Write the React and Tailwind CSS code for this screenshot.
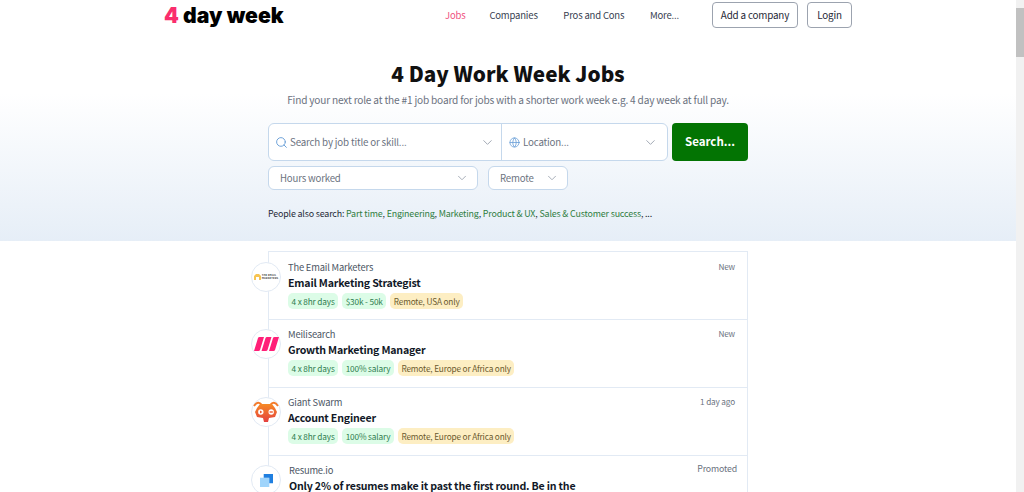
import React from "react";
import { Search, ChevronDown, Globe } from "lucide-react";

const sans = "font-['Noto_Sans_CJK_SC','Liberation_Sans',sans-serif]";

const NavLink = ({ children, active }) => (
  <a className={`whitespace-nowrap text-[9.5px] leading-[16px] tracking-[-0.018em] ${active ? "text-[#f0527f]" : "text-[#374151]"}`}>{children}</a>
);

const OutlineBtn = ({ children, className }) => (
  <a className={`flex h-[26px] items-center justify-center whitespace-nowrap rounded-[4px] border border-[#9ca3af] bg-white text-[9.85px] tracking-[-0.018em] text-[#1f2937] ${className}`}>{children}</a>
);

const Select = ({ label, className }) => (
  <div className={`flex h-[24px] items-center justify-between rounded-[6px] border border-[#c5d8ec] bg-white pl-[11px] pr-[8px] text-[9.65px] tracking-[-0.018em] text-[#6b7280] ${className}`}>
    <span>{label}</span>
    <ChevronDown size={14} strokeWidth={1.5} className="text-[#9ca3af]" />
  </div>
);

const Chip = ({ children, amber }) => (
  <span className={`flex h-[16px] items-center whitespace-nowrap rounded-[5px] px-[3.5px] text-[8.25px] leading-[16px] tracking-[-0.018em] ${amber ? "bg-[#fdeec3] text-[#6b5a2e]" : "bg-[#dcfce7] text-[#2f7d4f]"}`}>{children}</span>
);

const EmailLogo = () => (
  <div className="flex items-center gap-[1px]">
    <svg width="7" height="6" viewBox="0 0 7 6"><path d="M0 6V2l2-2h3l2 2v4H5V3H2v3z" fill="#f6c453" /></svg>
    <span className="text-[2.6px] font-bold leading-[3px] tracking-[0.1px] text-[#333]">THE EMAIL<br />MARKETERS</span>
  </div>
);

const MeiliLogo = () => (
  <svg width="25" height="14" viewBox="0 0 25 14">
    <path d="M0 14 4 1Q4.300 0 5.500 0H10L6 13Q5.700 14 4.500 14z M7.500 14 11.500 1Q11.800 0 13 0H17.500L13.500 13Q13.200 14 12 14z M15 14 19 1Q19.300 0 20.500 0H25L21 13Q20.700 14 19.500 14z" fill="#ff1f78" />
  </svg>
);

const SwarmLogo = () => (
  <svg width="26" height="26" viewBox="0 0 26 26">
    <defs>
      <linearGradient id="swarm" x1="0" y1="0" x2="0" y2="1">
        <stop offset="0" stopColor="#f68a26" />
        <stop offset="1" stopColor="#e43f3f" />
      </linearGradient>
    </defs>
    <path d="M9 6Q5 1 1 7M17 6Q21 1 25 7" stroke="#f47b2b" strokeWidth="1.800" fill="none" />
    <path d="M7 5h12l3 4 2 4-2 5-6 1-1 4h-4l-1-4-6-1-2-5 2-4z" fill="url(#swarm)" />
    <circle cx="7.800" cy="13" r="2.700" fill="#fff" />
    <circle cx="18.200" cy="13" r="2.700" fill="#fff" />
    <path d="M7 11.500v3l2.400-1.500z" fill="#f0592f" />
    <path d="M16.600 13h3.200" stroke="#f0592f" strokeWidth="1.400" />
  </svg>
);

const ResumeLogo = () => (
  <svg width="13" height="13" viewBox="0 0 14 14">
    <rect x="0" y="4" width="10" height="10" fill="#9fd4fb" />
    <path d="M4 0h10v10h-4V4H4z" fill="#1f7fe0" />
  </svg>
);

const Row = ({ logo, company, title, meta, chips, indent, first }) => (
  <div className="flex h-[68px] border-b border-[#e2eaf4] pr-[12px]">
    <div className={`-ml-[18px] flex h-[30px] w-[30px] shrink-0 items-center justify-center self-start rounded-full border border-[#e2eaf4] bg-white ${first ? "mt-[10px]" : "mt-[9px]"}`}>
      {logo}
    </div>
    <div className={`min-w-0 flex-1 ${first ? "pt-[8px]" : "pt-[7px]"} ${indent ? "pl-[8px]" : "pl-[7px]"}`}>
      <div className="text-[9.35px] leading-[14px] tracking-[-0.018em] text-[#4b5563]">{company}</div>
      <div className="mt-[1px] whitespace-nowrap text-[10.6px] font-bold leading-[16px] tracking-[-0.018em] text-[#111827]">{title}</div>
      {chips && <div className="mt-[2px] flex gap-[4px]">{chips}</div>}
    </div>
    <div className={`leading-[14px] tracking-[-0.018em] text-[#6b7280] ${first ? "pt-[7px]" : "pt-[6px]"} ${indent ? "-mr-[2px] text-[8.8px]" : "text-[8.2px]"}`}>{meta}</div>
  </div>
);

const Link = ({ children }) => <a className="text-[#2f7d3f]">{children}</a>;

export default function App() {
  return (
    <div className={`flex h-[492px] overflow-hidden bg-white ${sans}`}>
      <main className="flex w-[1016px] shrink-0 flex-col">
        <header className="flex h-[30px] shrink-0 items-start pl-[164px] pt-[2px]">
          <a className="w-[248px] font-['Inter',sans-serif] text-[21.2px] font-black leading-[26px] text-black">
            <span className="text-[#fa2e6d]">4</span> day week
          </a>
          <nav className="flex h-[26px] w-[267px] items-center pl-[33px]">
            <NavLink active>Jobs</NavLink>
            <span className="w-[27px]" />
            <NavLink>Companies</NavLink>
            <span className="w-[29px]" />
            <NavLink>Pros and Cons</NavLink>
            <span className="w-[29px]" />
            <NavLink>More...</NavLink>
          </nav>
          <OutlineBtn className="ml-[33px] w-[86px]">Add a company</OutlineBtn>
          <OutlineBtn className="ml-[9px] w-[45px]">Login</OutlineBtn>
        </header>

        <section className="flex h-[211px] shrink-0 flex-col items-center bg-[linear-gradient(180deg,#ffffff_30%,#e6eef7_100%)]">
          <h1 className="mt-[28px] text-[20.7px] font-black leading-[30px] text-[#111111]">4 Day Work Week Jobs</h1>
          <p className="mt-[5px] text-[10.1px] leading-[14px] tracking-[-0.018em] text-[#6b7280]">Find your next role at the #1 job board for jobs with a shorter work week e.g. 4 day week at full pay.</p>
          <div className="mt-[16px] w-[480px]">
            <div className="flex h-[38px] gap-[4px]">
              <div className="flex w-[400px] rounded-[6px] border border-[#c5d8ec] bg-white text-[9.75px] tracking-[-0.018em] text-[#6b7280]">
                <div className="flex w-[233px] items-center border-r-[1.5px] border-[#c5d8ec] pl-[6px] pr-[6px]">
                  <Search size={13} strokeWidth={1.8} className="text-[#6ca0d8]" />
                  <span className="ml-[2px] flex-1">Search by job title or skill...</span>
                  <ChevronDown size={15} strokeWidth={1.5} className="text-[#9ca3af]" />
                </div>
                <div className="flex flex-1 items-center pl-[7px] pr-[9px]">
                  <Globe size={11} strokeWidth={1.8} className="text-[#6ca0d8]" />
                  <span className="ml-[3px] flex-1">Location...</span>
                  <ChevronDown size={15} strokeWidth={1.5} className="text-[#9ca3af]" />
                </div>
              </div>
              <button className="flex w-[76px] items-center justify-center rounded-[4px] bg-[#037403] text-[11.5px] font-bold text-white">Search...</button>
            </div>
            <div className="mt-[5px] flex gap-[10px]">
              <Select label="Hours worked" className="w-[210px]" />
              <Select label="Remote" className="w-[80px]" />
            </div>
            <p className="mt-[17px] whitespace-nowrap text-[8.9px] leading-[14px] tracking-[-0.018em] text-[#1f2937]">
              People also search: <Link>Part time</Link>, <Link>Engineering</Link>, <Link>Marketing</Link>, <Link>Product &amp; UX</Link>, <Link>Sales &amp; Customer success</Link>, ...
            </p>
          </div>
        </section>

        <section className="mx-auto mt-[10px] w-[480px] shrink-0 border-x border-t border-[#e2eaf4]">
          <Row
            first
            logo={<EmailLogo />}
            company="The Email Marketers"
            title="Email Marketing Strategist"
            meta="New"
            chips={<><Chip>4 x 8hr days</Chip><Chip>$30k - 50k</Chip><Chip amber>Remote, USA only</Chip></>}
          />
          <Row
            logo={<MeiliLogo />}
            company="Meilisearch"
            title="Growth Marketing Manager"
            meta="New"
            chips={<><Chip>4 x 8hr days</Chip><Chip>100% salary</Chip><Chip amber>Remote, Europe or Africa only</Chip></>}
          />
          <Row
            logo={<SwarmLogo />}
            company="Giant Swarm"
            title="Account Engineer"
            meta="1 day ago"
            chips={<><Chip>4 x 8hr days</Chip><Chip>100% salary</Chip><Chip amber>Remote, Europe or Africa only</Chip></>}
          />
          <Row
            indent
            logo={<ResumeLogo />}
            company="Resume.io"
            title="Only 2% of resumes make it past the first round. Be in the"
            meta="Promoted"
          />
        </section>
      </main>
      <aside className="flex h-full w-[8px] flex-col bg-[#f1f1f1] pt-[8px]">
        <div className="h-[49px] bg-[#c1c1c1]" />
      </aside>
    </div>
  );
}
